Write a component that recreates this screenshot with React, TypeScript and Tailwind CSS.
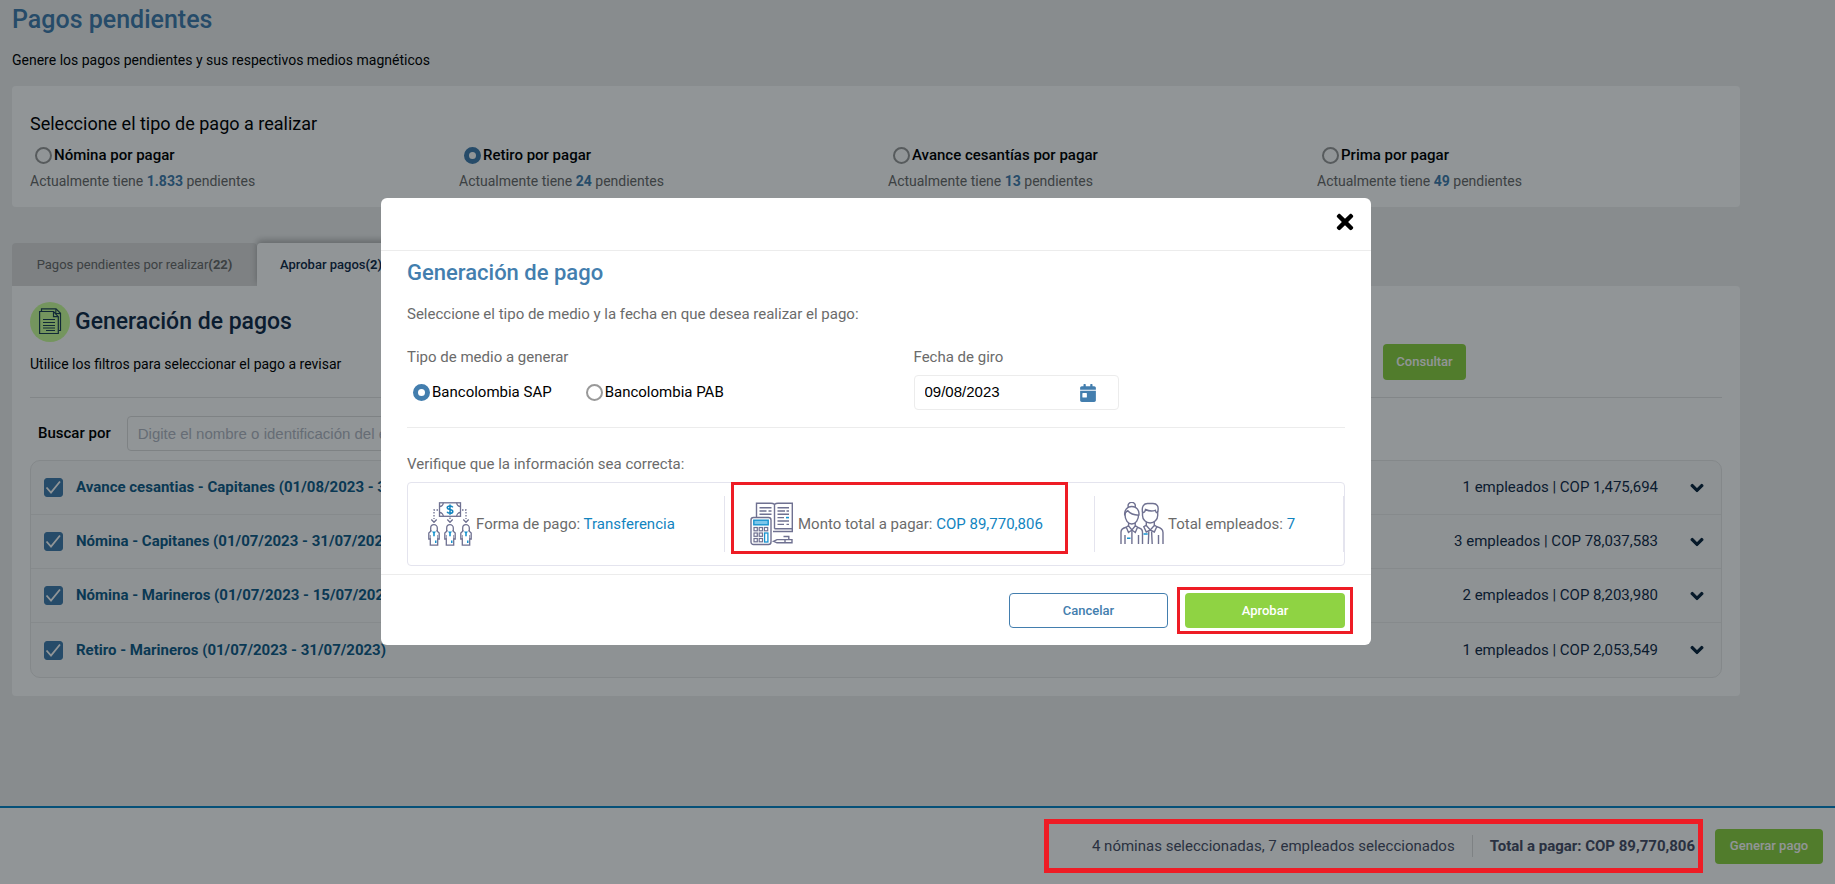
import React, { useState } from "react";
import { FaCalendarDay, FaChevronDown, FaTimes } from "react-icons/fa";

interface IPaymentType {
  id: string;
  name: string;
  pending: string;
}

interface IPayroll {
  id: number;
  name: string;
  employees: number;
  total: string;
}

const paymentTypes: IPaymentType[] = [
  { id: "nomina", name: "Nómina por pagar", pending: "1.833" },
  { id: "retiro", name: "Retiro por pagar", pending: "24" },
  { id: "cesantias", name: "Avance cesantías por pagar", pending: "13" },
  { id: "prima", name: "Prima por pagar", pending: "49" },
];

const payrolls: IPayroll[] = [
  {
    id: 1,
    name: "Avance cesantias - Capitanes (01/08/2023 - 31/08/2023)",
    employees: 1,
    total: "1,475,694",
  },
  {
    id: 2,
    name: "Nómina - Capitanes (01/07/2023 - 31/07/2023)",
    employees: 3,
    total: "78,037,583",
  },
  {
    id: 3,
    name: "Nómina - Marineros (01/07/2023 - 15/07/2023)",
    employees: 2,
    total: "8,203,980",
  },
  {
    id: 4,
    name: "Retiro - Marineros (01/07/2023 - 31/07/2023)",
    employees: 1,
    total: "2,053,549",
  },
];

const radioClass =
  "appearance-none shrink-0 w-[17px] h-[17px] rounded-full border-2 border-[#999999] bg-white checked:border-[5px] checked:border-[#437eae]";

function DocumentIcon() {
  return (
    <svg viewBox="0 0 40 40" className="w-10 h-10" aria-hidden="true">
      <circle cx="20" cy="20" r="20" fill="#cdff9b" />
      <g fill="none" stroke="#1f4257" strokeWidth="1.2">
        <path d="M11.5 9V6.800H26l4.500 4.500V28.500h-2" />
        <path d="M9.600 9.500H23.500l4.800 5.200V31.500H9.600z" fill="#cdff9b" />
        <path d="M23.500 9.500v5.200h4.800M26 7l-.3 4.500 4.800.2" />
        <path d="M13 17.500h12M13 20.500h12M13 23.500h12M13 26h12M16 28.500h9" />
      </g>
    </svg>
  );
}

function TransferIcon() {
  return (
    <svg viewBox="0 0 44 44" className="w-11 h-11" fill="none" aria-hidden="true">
      <g stroke="#6f7191" strokeWidth="1.300">
        <rect x="11.500" y="0.800" width="21" height="13.500" />
        <path d="M11.500 4.500a3.800 3.800 0 0 0 3.800-3.700M32.500 4.500a3.800 3.800 0 0 1-3.800-3.700M11.500 10.500a3.800 3.800 0 0 1 3.800 3.800M32.500 10.500a3.800 3.800 0 0 0-3.800 3.800" />
        <path d="M10 8H6v9M34 8h4v9M22 15.500V18" strokeDasharray="1.500 1.500" />
        <path d="M3.300 17.500 6 20.300l2.700-2.800M19.300 17.500l2.700 2.800 2.700-2.800M35.300 17.500l2.700 2.800 2.700-2.800" />
        {[6, 22, 38].map((x) => (
          <g key={x} transform={`translate(${x} 0)`}>
            <path d="M-3.300 29v-3a3.300 3.300 0 0 1 6.600 0v3" />
            <path d="M-2.500 28.500-5.200 31v6h1.500v6.200h7.400V37h1.500v-6l-2.700-2.500" />
            <path d="M-3.700 33v4M3.700 33v4" strokeWidth="0.8" />
          </g>
        ))}
      </g>
      <g fill="#1893cf">
        {[6, 22, 38].map((x) => (
          <path key={x} d={`M${x - 2} 29.500h4l-1.200 1.700v3h-1.600v-3zM${x + 1} 38.500h1.500V41H${x + 1}z`} />
        ))}
      </g>
      <path
        d="M24.800 5.300c-.5-1-1.600-1.400-2.800-1.400-1.600 0-2.800.7-2.800 1.800 0 2.600 5.600 1.100 5.600 3.700 0 1.200-1.200 1.900-2.800 1.900-1.300 0-2.500-.5-2.900-1.600M22 2.500v10.200"
        stroke="#1284bf"
        strokeWidth="1.500"
      />
    </svg>
  );
}

function CalculatorIcon() {
  return (
    <svg viewBox="0 0 44 44" className="w-11 h-11" fill="none" aria-hidden="true">
      <g stroke="#6f7191" strokeWidth="1.400">
        <path d="M24.500 2.500c-1-.9-2-1.200-3.500-1.200H6.500v14M24.500 2.500c1-.9 2-1.200 3.500-1.200h14.300v25.500H24.500M24.500 2.500v24.300M24.500 29.500h17.800v-3M23 29.500h1.500" />
        <path d="M9.500 5.800h12M9.500 9h7M18.500 9h3M9.500 12.200h12M27.500 5.800H39M27.500 9H35M36.500 9H39M27.500 12.200H39M27.500 15.600H34M27.500 19H39M27.500 22.400H34M36.500 22.400H39" />
        <rect x="1" y="15.500" width="20" height="27" rx="2.500" fill="#fff" />
        <path d="M23.500 39.300l3.500-1.700h15v3.200H27zM33.500 34.500h5.300v3" />
        <path d="M35 37.600v3.200" />
        {[4, 9.200, 14.400].map((x) => (
          <rect key={x} x={x} y="25.500" width="3.300" height="3.300" strokeWidth="1.200" />
        ))}
        {[4, 9.200].map((x) => (
          <g key={x} strokeWidth="1.200">
            <rect x={x} y="31" width="3.300" height="3.300" />
            <rect x={x} y="36.500" width="3.300" height="3.300" />
          </g>
        ))}
      </g>
      <rect x="3.800" y="18.200" width="14.400" height="4.600" fill="#7cc6ea" stroke="#1893cf" strokeWidth="1.400" />
      <rect x="14.600" y="31" width="3.300" height="9" stroke="#1893cf" strokeWidth="1.300" />
      <path d="M36 15.600h3" stroke="#1893cf" strokeWidth="1.600" />
    </svg>
  );
}

function EmployeesIcon() {
  return (
    <svg viewBox="0 0 44 44" className="w-11 h-11" fill="none" aria-hidden="true">
      <g stroke="#6f7191" strokeWidth="1.400">
        <path d="M8.500 5.500a3.600 3.600 0 1 1 6.400 0" />
        <path d="M4.800 13.500c-.9-5 2.200-9 7-9s8 4 7 9" />
        <path d="M5 12.500c0 5.500 3 9.500 6.800 9.500s6.800-4 6.800-9.500M5 13.200c-.3-2 .8-3.500 2.800-4.500 2.500 3 6 4.300 10.800 4.500" />
        <path d="M8.600 21v3l3.300 4 3.300-4v-3M8.600 23.500l-2.300 1.700 2.200 5.300 3.400-2.500 3.400 2.500 2.200-5.300-2.300-1.700" />
        <path d="M1 42V30c0-2.500 2-4 5.300-4.800M5 33v9M11.900 28v14M18.500 33v9M22.500 42V30c0-2.500-2-4-5.200-4.800" />
        <path d="M22.500 9.500C21.500 4.500 24 1.500 27.500 1.500H33c4 0 6 3 4.800 8" />
        <path d="M22.500 9v4.500c0 4 3.500 7.500 7.600 7.500s7.600-3.500 7.600-7.500V9M22.500 11c2-.5 2.800-1.500 3-3.500 3 1.500 6.500 2 9.800.8.300 1.500 1 2.400 2.400 2.700" />
        <path d="M26.300 20v3.500l4 4.500 4-4.500V20M26.300 23l-2.500 1.800 2.500 5.200 4-2 4 2 2.500-5.200-2.500-1.800" />
        <path d="M36.800 24.800c4 1 6.200 2.700 6.200 5.700V42M38.500 33v9M28.800 29.500 28.300 42M31.600 29.500l.6 12.500" />
      </g>
      <path d="M7 36.300h3.500M23.500 32h4.200" stroke="#1893cf" strokeWidth="1.600" />
    </svg>
  );
}

function PayrollRow({ payroll }: { payroll: IPayroll }) {
  const [checked, setChecked] = useState(true);

  return (
    <li className="flex items-center h-[54px] pl-[13px] pr-4 border-b border-[#ececec] last:border-b-0">
      <label className="flex items-center gap-[13px] text-[15px] font-bold text-[#135d89] whitespace-nowrap">
        <span className="relative w-[19px] h-[19px]">
          <input
            type="checkbox"
            checked={checked}
            onChange={() => setChecked(!checked)}
            className="block appearance-none w-[19px] h-[19px] rounded-[3px] border border-[#437eae] checked:bg-[#437eae]"
          />
          <svg
            viewBox="0 0 19 19"
            className="absolute inset-0 pointer-events-none"
            fill="none"
            stroke="#fff"
            strokeWidth="1.800"
          >
            <path d="M2.500 9.500 7 14.500 16 3.500" />
          </svg>
        </span>
        {payroll.name}
      </label>
      <span className="ml-auto text-[15px] text-[#142d4a]">
        {payroll.employees} empleados | COP {payroll.total}
      </span>
      <button
        type="button"
        aria-label={`Ver detalle de ${payroll.name}`}
        className="ml-[31px] text-[#0d2740]"
      >
        <FaChevronDown strokeWidth={40} className="w-4 h-3.5" />
      </button>
    </li>
  );
}

function PaymentModal() {
  const [medium, setMedium] = useState("SAP");
  const [date, setDate] = useState("09/08/2023");

  return (
    <div className="fixed inset-0 z-10 flex items-center justify-center pr-[83px] pb-[41px] bg-[#00090e]/43">
      <div
        role="dialog"
        aria-modal="true"
        aria-labelledby="modal-title"
        className="w-full max-w-[990px] rounded-md bg-white text-[15px] text-[#6b6b6b]"
      >
        <div className="flex items-center justify-end h-[53px] px-3.5 border-b border-[#ececec]">
          <button type="button" aria-label="Cerrar" className="pb-1 text-black">
            <FaTimes className="w-6 h-6" />
          </button>
        </div>

        <div className="px-[26px] pt-[7px] pb-2">
          <h2
            id="modal-title"
            className="text-[22px] leading-[30px] font-medium text-[#437eae]"
          >
            Generación de pago
          </h2>
          <p className="mt-4 leading-5">
            Seleccione el tipo de medio y la fecha en que desea realizar el
            pago:
          </p>

          <div className="flex mt-[23px] pb-[17px] border-b border-[#ececec]">
            <fieldset className="w-[54%]">
              <legend className="leading-5">Tipo de medio a generar</legend>
              <div className="flex gap-[34px] mt-3.5 pl-1.5 text-black">
                <label className="flex items-center gap-0.5">
                  <input
                    type="radio"
                    name="medium"
                    className={radioClass}
                    checked={medium === "SAP"}
                    onChange={() => setMedium("SAP")}
                  />
                  Bancolombia SAP
                </label>
                <label className="flex items-center gap-0.5">
                  <input
                    type="radio"
                    name="medium"
                    className={radioClass}
                    checked={medium === "PAB"}
                    onChange={() => setMedium("PAB")}
                  />
                  Bancolombia PAB
                </label>
              </div>
            </fieldset>
            <div>
              <label htmlFor="date" className="block leading-5">
                Fecha de giro
              </label>
              <div className="flex items-center mt-2 w-[205px] h-[35px] pl-2.5 pr-[22px] rounded border border-[#ececec]">
                <input
                  id="date"
                  value={date}
                  onChange={(e) => setDate(e.target.value)}
                  className="flex-1 min-w-0 font-['Liberation_Sans',sans-serif] text-black outline-none"
                />
                <FaCalendarDay className="w-4 h-[18px] text-[#437eae]" />
              </div>
            </div>
          </div>

          <p className="mt-[26px] leading-5">
            Verifique que la información sea correcta:
          </p>
          <div className="grid grid-cols-[317fr_370fr_249fr] mt-2 py-[13px] rounded border border-[#e4e4ee]">
            <div className="flex items-center h-[56px] pl-5 border-r border-[#e4e4ee]">
              <TransferIcon />
              <p className="ml-1">
                Forma de pago:{" "}
                <span className="text-[#1284bf]">Transferencia</span>
              </p>
            </div>
            <div className="relative flex items-center h-[56px] pl-[25px] border-r border-[#e4e4ee]">
              <CalculatorIcon />
              <p className="ml-1">
                Monto total a pagar:{" "}
                <span className="text-[#1284bf]">COP 89,770,806</span>
              </p>
              <span className="absolute left-1.5 right-[26px] -top-3.5 -bottom-0.5 border-3 border-[#ee1c25]" />
            </div>
            <div className="flex items-center h-[56px] pl-[25px] border-r border-[#e4e4ee]">
              <EmployeesIcon />
              <p className="ml-1">
                Total empleados: <span className="text-[#1284bf]">7</span>
              </p>
            </div>
          </div>
        </div>

        <div className="flex justify-end gap-[17px] pt-[18px] pb-[17px] px-[26px] border-t border-[#ececec] text-[13px] font-medium">
          <button
            type="button"
            className="w-[159px] h-[35px] rounded border border-[#437eae] text-[#437eae]"
          >
            Cancelar
          </button>
          <div className="relative">
            <button
              type="button"
              className="w-[160px] h-[35px] rounded bg-[#8fd343] text-white"
            >
              Aprobar
            </button>
            <span className="absolute -inset-x-2 -inset-y-1.5 border-3 border-[#ee1c25]" />
          </div>
        </div>
      </div>
    </div>
  );
}

export default function App() {
  const [paymentType, setPaymentType] = useState("retiro");

  return (
    <div className="flex flex-col min-h-screen bg-[#f0f0f0] font-['Roboto',sans-serif] text-black">
      <main className="flex-1 pl-3 pr-[95px] pb-8">
        <h1 className="pt-1 text-[25px] leading-8 font-medium text-[#437eae]">
          Pagos pendientes
        </h1>
        <p className="mt-3.5 text-[14px] leading-5">
          Genere los pagos pendientes y sus respectivos medios magnéticos
        </p>

        <section className="mt-4 h-[121px] px-[18px] pt-[25px] rounded bg-white">
          <h2 className="text-[18px] leading-[26px]">
            Seleccione el tipo de pago a realizar
          </h2>
          <div className="grid grid-cols-4 gap-6 mt-2">
            {paymentTypes.map((type) => (
              <div key={type.id}>
                <label className="flex items-center gap-0.5 pl-[5px] text-[15px] leading-5 font-medium">
                  <input
                    type="radio"
                    name="paymentType"
                    className={radioClass}
                    checked={paymentType === type.id}
                    onChange={() => setPaymentType(type.id)}
                  />
                  {type.name}
                </label>
                <p className="mt-1.5 text-[14px] leading-5 text-[#6b6b6b]">
                  Actualmente tiene{" "}
                  <b className="text-[#437eae]">{type.pending}</b> pendientes
                </p>
              </div>
            ))}
          </div>
        </section>

        <div className="flex mt-9 text-[13px]">
          <button
            type="button"
            className="w-[245px] h-[43px] rounded-t bg-[#dddcdc] text-[#6b6b6b]"
          >
            Pagos pendientes por realizar<b>(22)</b>
          </button>
          <button
            type="button"
            className="h-[43px] px-[23px] rounded-t bg-white font-medium text-[#142d4a] shadow-[0_-3px_6px_rgba(0,0,0,0.25)]"
          >
            Aprobar pagos<b>(2)</b>
          </button>
        </div>

        <section className="relative px-[18px] pt-4 pb-[18px] rounded-b rounded-tr bg-white">
          <div className="flex items-center pb-4 border-b border-[#e4e4e4]">
            <div className="flex-1">
              <div className="flex items-center gap-[5px]">
                <DocumentIcon />
                <h2 className="text-[23px] leading-9 font-medium text-[#142d4a]">
                  Generación de pagos
                </h2>
              </div>
              <p className="mt-3 mb-[7px] text-[14px] leading-5">
                Utilice los filtros para seleccionar el pago a revisar
              </p>
            </div>
            <button
              type="button"
              className="w-[83px] h-9 mr-64 mt-10 rounded bg-[#8fd343] text-[13px] font-medium text-white"
            >
              Consultar
            </button>
          </div>

          <div className="flex items-center gap-4 mt-[18px] pl-2">
            <label htmlFor="search" className="text-[15px] font-medium">
              Buscar por
            </label>
            <input
              id="search"
              placeholder="Digite el nombre o identificación del empleado"
              className="w-[400px] h-[35px] px-2.5 rounded border border-[#dedede] text-[15px] font-['Liberation_Sans',sans-serif] placeholder:text-[#b4b8c4]"
            />
          </div>

          <ul className="mt-[9px] rounded-[10px] border border-[#e8e8e8] bg-[#fafafa]">
            {payrolls.map((payroll) => (
              <PayrollRow key={payroll.id} payroll={payroll} />
            ))}
          </ul>
        </section>
      </main>

      <footer className="flex items-center justify-end h-[78px] pr-3 border-t-2 border-[#0a87c8] bg-white text-[15px] text-[#4a5068]">
        <div className="relative flex items-center">
          <span>4 nóminas seleccionadas, 7 empleados seleccionados</span>
          <span className="ml-[17px] pl-[17px] border-l border-[#dedede] font-bold">
            Total a pagar: COP 89,770,806
          </span>
          <span className="absolute z-20 -left-12 -right-2 -inset-y-4 border-[5px] border-[#ee1c25]" />
        </div>
        <button
          type="button"
          className="w-[108px] h-[35px] ml-5 rounded bg-[#8fd343] text-[13px] font-medium text-white"
        >
          Generar pago
        </button>
      </footer>

      <PaymentModal />
    </div>
  );
}
